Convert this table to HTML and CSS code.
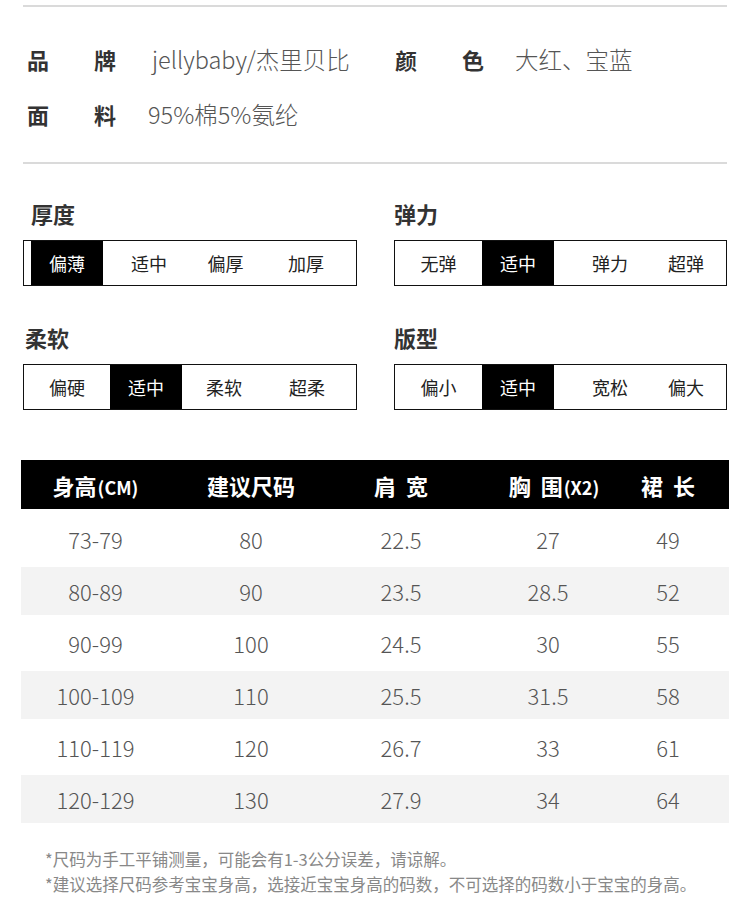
FILE: index.html
```html
<!DOCTYPE html>
<html lang="zh-CN">
<head>
<meta charset="utf-8">
<title>尺码信息</title>
<link rel="stylesheet" href="styles.css">
</head>
<body>
<div class="page">
  <hr class="rule rule--top">
  <section class="attrs">
    <div class="attr-row">
      <div class="attr attr--wide"><span class="attr-label"><b>品</b><b>牌</b></span><span class="attr-value">jellybaby/杰里贝比</span></div>
      <div class="attr"><span class="attr-label"><b>颜</b><b>色</b></span><span class="attr-value attr-value--tight">大红、宝蓝</span></div>
    </div>
    <div class="attr-row">
      <div class="attr attr--wide"><span class="attr-label"><b>面</b><b>料</b></span><span class="attr-value attr-value--fab">95%棉5%氨纶</span></div>
    </div>
  </section>
  <hr class="rule">

  <section class="scales">
    <div class="scale">
      <h3 class="scale-title scale-title--a">厚度</h3>
      <div class="scale-box scale-box--thick">
        <span class="opt opt--on">偏薄</span><span class="opt">适中</span><span class="opt">偏厚</span><span class="opt">加厚</span>
      </div>
    </div>
    <div class="scale">
      <h3 class="scale-title">弹力</h3>
      <div class="scale-box scale-box--right">
        <span class="opt">无弹</span><span class="opt opt--on">适中</span><span class="opt">弹力</span><span class="opt">超弹</span>
      </div>
    </div>
    <div class="scale">
      <h3 class="scale-title scale-title--b">柔软</h3>
      <div class="scale-box scale-box--soft">
        <span class="opt">偏硬</span><span class="opt opt--on">适中</span><span class="opt">柔软</span><span class="opt">超柔</span>
      </div>
    </div>
    <div class="scale">
      <h3 class="scale-title">版型</h3>
      <div class="scale-box scale-box--right">
        <span class="opt">偏小</span><span class="opt opt--on">适中</span><span class="opt">宽松</span><span class="opt">偏大</span>
      </div>
    </div>
  </section>

  <section class="size-table">
    <div class="tr tr--head">
      <span class="td">身高<small>(CM)</small></span>
      <span class="td">建议尺码</span>
      <span class="td">肩&nbsp;&nbsp;宽</span>
      <span class="td td--chest">胸&nbsp;&nbsp;围<small>(X2)</small></span>
      <span class="td">裙&nbsp;&nbsp;长</span>
    </div>
    <div class="tr"><span class="td">73-79</span><span class="td">80</span><span class="td">22.5</span><span class="td">27</span><span class="td">49</span></div>
    <div class="tr tr--alt"><span class="td">80-89</span><span class="td">90</span><span class="td">23.5</span><span class="td">28.5</span><span class="td">52</span></div>
    <div class="tr"><span class="td">90-99</span><span class="td">100</span><span class="td">24.5</span><span class="td">30</span><span class="td">55</span></div>
    <div class="tr tr--alt"><span class="td">100-109</span><span class="td">110</span><span class="td">25.5</span><span class="td">31.5</span><span class="td">58</span></div>
    <div class="tr"><span class="td">110-119</span><span class="td">120</span><span class="td">26.7</span><span class="td">33</span><span class="td">61</span></div>
    <div class="tr tr--alt"><span class="td">120-129</span><span class="td">130</span><span class="td">27.9</span><span class="td">34</span><span class="td">64</span></div>
  </section>

  <section class="notes">
    <p>*尺码为手工平铺测量，可能会有1-3公分误差，请谅解。</p>
    <p>*建议选择尺码参考宝宝身高，选接近宝宝身高的码数，不可选择的码数小于宝宝的身高。</p>
  </section>
</div>
</body>
</html>
```

FILE: styles.css
```css
* { box-sizing: border-box; }
html, body { margin: 0; padding: 0; background: #fff; }
body {
  font-family: "Noto Sans CJK SC", "Noto Sans", sans-serif;
  color: #333;
  width: 750px;
}
.page { padding-top: 5px; }

.rule {
  margin: 0 23px;
  border: 0;
  height: 2px;
  background: #dadada;
}

.attrs { padding: 24px 0 21px 27px; }
.attr-row { display: flex; height: 55px; align-items: center; }
.attr { display: flex; align-items: center; }
.attr--wide { width: 368px; }
.attr-label {
  display: flex;
  justify-content: space-between;
  width: 89px;
  font-size: 22px;
  font-weight: 700;
  color: #333;
}
.attr-label b { font-weight: 700; }
.attr-value {
  margin-left: 36px;
  font-size: 23.5px;
  font-weight: 300;
  color: #555;
}
.attr-value--tight { margin-left: 31px; }
.attr-value--fab { margin-left: 32px; }

.scales {
  display: grid;
  grid-template-columns: 334px 333px;
  column-gap: 37px;
  row-gap: 36px;
  padding: 34px 23px 0;
}
.scale-title {
  margin: 0 0 12px;
  height: 30px;
  line-height: 30px;
  font-size: 22px;
  font-weight: 700;
  color: #333;
}
.scale-title--a { padding-left: 8px; }
.scale-title--b { padding-left: 2px; }

.scale-box {
  display: grid;
  height: 46px;
  border: 1px solid #111;
  font-size: 18px;
  color: #222;
}
.scale-box--thick { grid-template-columns: 72px 92px 61px 100px; padding-left: 7px; }
.scale-box--soft { grid-template-columns: 86px 72px 84px 82px; }
.scale-box--right { grid-template-columns: 87px 72px 112px 40px; }
.opt {
  display: flex;
  align-items: center;
  justify-content: center;
  white-space: nowrap;
}
.opt--on { background: #000; color: #fff; }

.size-table { margin: 50px 21px 0; }
.tr {
  display: grid;
  grid-template-columns: 149px 162px 138px 156px 84px;
  height: 52px;
  padding: 2px 0;
  background-clip: content-box;
  align-items: center;
  font-size: 22px;
  font-weight: 300;
  color: #555;
}
.tr--alt { background-color: #f3f3f3; }
.tr--head {
  height: 49px;
  padding: 0;
  margin-bottom: 4px;
  background: #000;
  color: #fff;
  font-weight: 700;
  font-size: 22px;
}
.tr--head small { font-size: 18px; font-weight: 700; margin-left: 1px; }
.td { text-align: center; white-space: nowrap; }
.td--chest { padding-left: 12px; }

.notes {
  margin-top: 22px;
  padding-left: 45px;
  font-size: 16.5px;
  color: #888;
}
.notes p { margin: 0; line-height: 25px; }
```
